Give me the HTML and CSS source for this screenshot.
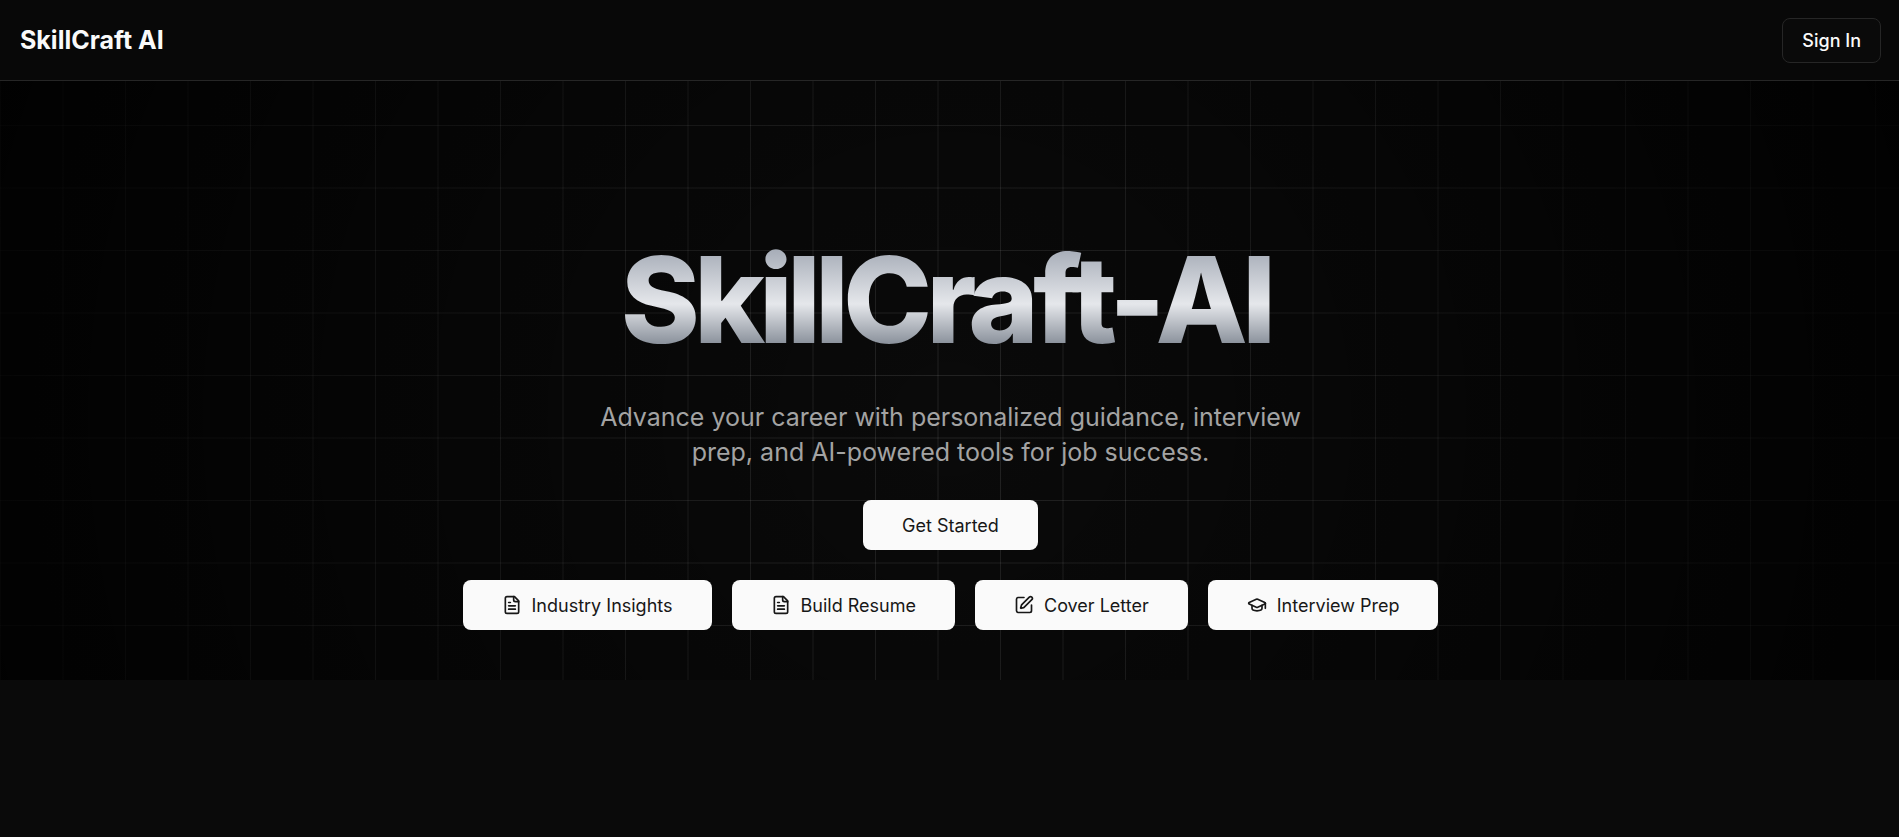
FILE: index.html
```html
<!DOCTYPE html>
<html lang="en">
<head>
<meta charset="utf-8">
<meta name="viewport" content="width=device-width, initial-scale=1">
<title>SkillCraft AI</title>
<link rel="stylesheet" href="styles.css">
</head>
<body>
<svg class="sprite" aria-hidden="true">
  <symbol id="file-text" viewBox="0 0 24 24">
    <path d="M15 2H6a2 2 0 0 0-2 2v16a2 2 0 0 0 2 2h12a2 2 0 0 0 2-2V7Z"/>
    <path d="M14 2v4a2 2 0 0 0 2 2h4"/>
    <path d="M10 9H8"/><path d="M16 13H8"/><path d="M16 17H8"/>
  </symbol>
  <symbol id="pen-box" viewBox="0 0 24 24">
    <path d="M12 3H5a2 2 0 0 0-2 2v14a2 2 0 0 0 2 2h14a2 2 0 0 0 2-2v-7"/>
    <path d="M18.375 2.625a1 1 0 0 1 3 3l-9.013 9.014a2 2 0 0 1-.853.505l-2.873.84a.5.5 0 0 1-.62-.62l.84-2.873a2 2 0 0 1 .506-.852z"/>
  </symbol>
  <symbol id="graduation-cap" viewBox="0 0 24 24">
    <path d="M21.42 10.922a1 1 0 0 0-.019-1.838L12.83 5.18a2 2 0 0 0-1.66 0L2.6 9.08a1 1 0 0 0 0 1.832l8.57 3.908a2 2 0 0 0 1.66 0z"/>
    <path d="M22 10v6"/>
    <path d="M6 12.5V16a6 3 0 0 0 12 0v-3.5"/>
  </symbol>
</svg>

<header class="site-header">
  <a class="brand" href="#">SkillCraft AI</a>
  <button class="btn-outline" type="button">Sign In</button>
</header>

<main>
  <section class="hero">
    <h1 class="hero-title">SkillCraft-AI</h1>
    <p class="hero-text">Advance your career with personalized guidance, interview prep, and AI-powered tools for job success.</p>
    <a class="btn" href="#">Get Started</a>
    <nav class="tools" aria-label="Tools">
      <a class="btn" href="#"><svg class="icon" aria-hidden="true"><use href="#file-text"/></svg>Industry Insights</a>
      <a class="btn" href="#"><svg class="icon" aria-hidden="true"><use href="#file-text"/></svg>Build Resume</a>
      <a class="btn" href="#"><svg class="icon" aria-hidden="true"><use href="#pen-box"/></svg>Cover Letter</a>
      <a class="btn" href="#"><svg class="icon" aria-hidden="true"><use href="#graduation-cap"/></svg>Interview Prep</a>
    </nav>
  </section>
</main>
</body>
</html>
```
FILE: styles.css
```css
*,
*::before {
  box-sizing: border-box;
}

body {
  margin: 0;
  min-height: 100vh;
  background: #0a0a0a;
  color: #fafafa;
  font-family: Inter, "Liberation Sans", sans-serif;
  font-size: 18px;
}

a {
  color: inherit;
  text-decoration: none;
}

.sprite {
  display: none;
}

.site-header {
  display: flex;
  align-items: center;
  justify-content: space-between;
  height: 81px;
  padding: 0 18px 0 20px;
  border-bottom: 1px solid #262626;
  background: #080808;
}

.brand {
  font-size: 25px;
  font-weight: 700;
}

.btn-outline {
  height: 45px;
  padding: 0 19px;
  border: 1px solid #262626;
  border-radius: 8px;
  background: #0a0a0a;
  color: #fafafa;
  font: 500 18px Inter, sans-serif;
}

.hero {
  position: relative;
  isolation: isolate;
  display: flex;
  flex-direction: column;
  align-items: center;
  padding: 159px 20px 50px 22px;
  text-align: center;
}

/* Grid lines, dimmed toward the corners by a radial shade */
.hero::before {
  content: "";
  position: absolute;
  inset: 0;
  z-index: -1;
  background:
    radial-gradient(circle at 50% 338px, transparent, rgba(0, 0, 0, 0.9) 1036px),
    linear-gradient(90deg, rgba(255, 255, 255, 0.1) 1px, transparent 1px) 0 0 / 125px 125px,
    linear-gradient(90deg, rgba(255, 255, 255, 0.05) 2px, transparent 2px) 62px 0 / 125px 125px,
    linear-gradient(rgba(255, 255, 255, 0.1) 1px, transparent 1px) 0 44px / 125px 125px,
    linear-gradient(rgba(255, 255, 255, 0.05) 2px, transparent 2px) 0 106px / 125px 125px;
}

.hero-title {
  margin: 0;
  padding: 0 10px 8px 0;
  background: linear-gradient(#9ca3af, #e5e7eb 50%, #535d6b);
  background-clip: text;
  -webkit-background-clip: text;
  color: transparent;
  font-size: 120px;
  font-weight: 800;
  line-height: 120px;
  letter-spacing: -0.05em;
}

.hero-text {
  max-width: 750px;
  margin: 32px 0 30px;
  color: #a3a3a3;
  font-size: 25px;
  line-height: 35px;
}

.btn {
  display: inline-flex;
  align-items: center;
  gap: 10px;
  height: 50px;
  padding: 0 39px;
  border-radius: 8px;
  background: #fafafa;
  color: #171717;
  font-weight: 400;
}

.tools {
  display: flex;
  flex-wrap: wrap;
  justify-content: center;
  gap: 20px;
  margin-top: 30px;
}

.icon {
  width: 20px;
  height: 20px;
  fill: none;
  stroke: currentColor;
  stroke-width: 2;
  stroke-linecap: round;
  stroke-linejoin: round;
}
```
